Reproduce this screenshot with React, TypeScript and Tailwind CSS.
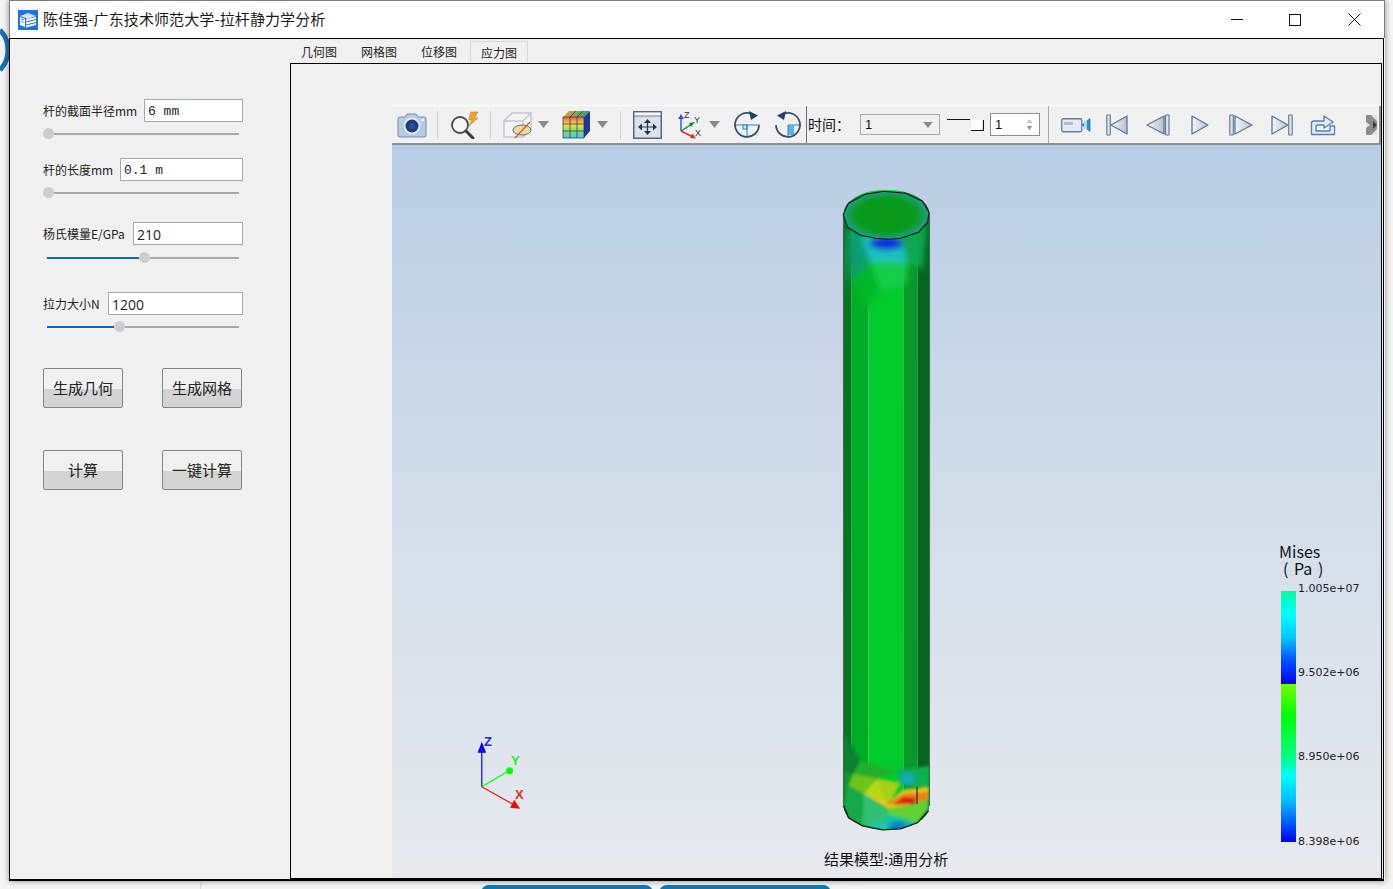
const cjk = "font-['Noto_Sans_CJK_SC','Noto_Sans',sans-serif]";

/* ── Left panel parts ─────────────────────────────────────── */

function Slider({ offset, className }: { offset: number; className: string }) {
  return (
    <div className={`flex h-[11px] w-[196px] items-center ${className}`}>
      {offset > 0 && (
        <div className="ml-[4px] h-[2px] bg-[#0b68b8]" style={{ width: offset - 4 }} />
      )}
      <div className="h-[11px] w-[11px] shrink-0 rounded-full bg-[#cdcdcd]" />
      <div className="h-[2px] flex-1 bg-[#a9a9a9]" />
    </div>
  );
}

function Field({
  label,
  value,
  inputClass,
  valueClass,
  className,
}: {
  label: string;
  value: string;
  inputClass: string;
  valueClass: string;
  className: string;
}) {
  return (
    <div className={`flex h-[23px] w-[200px] items-center justify-between ${className}`}>
      <span className={`text-[12px] whitespace-nowrap text-[#222] ${cjk}`}>{label}</span>
      <div className={`flex h-[23px] items-center border border-[#a8a8a8] bg-white pt-[2px] pl-[3px] whitespace-pre text-[#222] ${inputClass} ${valueClass}`}>
        {value}
      </div>
    </div>
  );
}

function PanelButton({ children }: { children: string }) {
  return (
    <div className={`flex h-[40px] w-[80px] items-center justify-center rounded-[2px] border border-[#858585] bg-[linear-gradient(#f0f0f0_0%,#f0f0f0_52%,#d4d4d4_52%,#d4d4d4_100%)] text-[15px] text-[#222] ${cjk}`}>
      {children}
    </div>
  );
}

/* ── Toolbar icons ────────────────────────────────────────── */

function Caret({ className }: { className: string }) {
  return (
    <svg width="11" height="7" viewBox="0 0 11 7" className={className}>
      <path d="M0 0H11L5.5 7Z" fill="#8a8a8a" />
    </svg>
  );
}

function Separator({ className }: { className: string }) {
  return <div className={`h-[28px] w-px bg-[#d0d0d0] ${className}`} />;
}

function CameraIcon() {
  return (
    <svg width="30" height="26" viewBox="0 0 30 26" className="ml-[5px]">
      <path d="M1 6.5Q1 5 3 5H8L10 2H19L21 5H27Q29 5 29 6.5V23Q29 25 27 25H3Q1 25 1 23Z" fill="#b7cbe2" stroke="#6a8fb5" />
      <rect x="24" y="7" width="3" height="2" fill="#eef4fa" />
      <circle cx="15" cy="14" r="8.5" fill="#dfe9f4" />
      <circle cx="15" cy="14" r="6.5" fill="#1d3c78" />
      <circle cx="15" cy="14" r="3" fill="#2c5395" />
    </svg>
  );
}

function SearchIcon() {
  return (
    <svg width="29" height="28" viewBox="0 0 29 28" className="ml-[12px]">
      <circle cx="10" cy="14" r="8" fill="#f7f7f7" stroke="#4a4a4a" strokeWidth="1.8" />
      <path d="M16 20L23 27" stroke="#3c3c3c" strokeWidth="3" strokeLinecap="round" />
      <path d="M21 1H28L24.5 7H28L19 15L22 9H18.5Z" fill="#f0a02c" stroke="#c8791a" strokeWidth="0.5" />
    </svg>
  );
}

function BoxIcon() {
  return (
    <svg width="29" height="29" viewBox="0 0 29 29" className="ml-[12px]">
      <path d="M1 11L9 3H28V18L20 27H1Z" fill="#f4f4f4" stroke="#c0c6d2" strokeWidth="1.5" />
      <path d="M1 11H20V27M20 11L28 3" fill="none" stroke="#c0c6d2" strokeWidth="1.5" />
      <ellipse cx="19" cy="20" rx="9" ry="5" fill="#e8dd9a" stroke="#5a6a8a" />
      <path d="M12 28L27 12" stroke="#d8562c" strokeWidth="1.2" />
    </svg>
  );
}

function RubikIcon() {
  return (
    <svg width="29" height="29" viewBox="0 0 29 29" className="ml-[13px]">
      <defs>
        <linearGradient id="rubikFace" x1="0" y1="0" x2="0" y2="1">
          <stop offset="0" stopColor="#f0603c" />
          <stop offset="0.35" stopColor="#f6d84a" />
          <stop offset="0.65" stopColor="#86dc6c" />
          <stop offset="1" stopColor="#4cc4ec" />
        </linearGradient>
        <linearGradient id="rubikTop" x1="0" y1="0" x2="1" y2="0">
          <stop offset="0" stopColor="#e8a040" />
          <stop offset="1" stopColor="#30a070" />
        </linearGradient>
      </defs>
      <path d="M1 7L7 1H28L22 7Z" fill="url(#rubikTop)" />
      <path d="M22 7L28 1V21L22 28Z" fill="#1c3a9c" />
      <rect x="1" y="7" width="21" height="21" fill="url(#rubikFace)" />
      <path d="M1 7H22V28H1ZM8 7V28M15 7V28M1 14H22M1 21H22M8 7L14 1M15 7L21 1" fill="none" stroke="#24384a" strokeWidth="0.7" />
    </svg>
  );
}

function FitIcon() {
  return (
    <svg width="29" height="28" viewBox="0 0 29 28" className="ml-[12px]">
      <rect x="0.75" y="0.75" width="27.5" height="26.5" fill="#dde1e8" stroke="#51678c" strokeWidth="1.5" />
      <rect x="1" y="1" width="27" height="4" fill="#f4f6f9" stroke="#51678c" strokeWidth="0.8" />
      <path d="M14.5 8L18 12H11ZM14.5 24L11 20H18ZM5 16L9 12.5V19.5ZM24 16L20 19.5V12.5Z" fill="#23364f" />
      <path d="M14.5 12V20M9 16H20" stroke="#23364f" strokeWidth="1.2" />
    </svg>
  );
}

function AxesIcon() {
  return (
    <svg width="28" height="30" viewBox="0 0 28 30" className="ml-[14px]">
      <path d="M5 21V7" stroke="#2a55c8" strokeWidth="1.4" />
      <path d="M5 4L8 9H2Z" fill="#2a55c8" />
      <path d="M5 21L16 14" stroke="#168a3a" strokeWidth="1.4" />
      <path d="M19 12L15 17L13 13Z" fill="#168a3a" />
      <path d="M5 21L17 27" stroke="#e02c2c" strokeWidth="1.4" />
      <path d="M20 28.5L14 28L16.5 23.5Z" fill="#e02c2c" />
      <text x="8" y="8" fontSize="9" fontFamily="Liberation Sans" fill="#333">Z</text>
      <text x="18" y="13" fontSize="9" fontFamily="Liberation Sans" fill="#333">Y</text>
      <text x="19" y="26" fontSize="9" fontFamily="Liberation Sans" fill="#333">X</text>
    </svg>
  );
}

function RotateCwIcon() {
  return (
    <svg width="28" height="28" viewBox="0 0 28 28" className="ml-[13px]">
      <path d="M1.5 14H26.5" stroke="#2a80c8" strokeWidth="1" />
      <rect x="10" y="14" width="4" height="4" fill="#d3e6f6" stroke="#2a80c8" />
      <path d="M14 14V26" stroke="#2a80c8" strokeWidth="1" />
      <path d="M19 3A12 12 0 1 0 26 14" fill="none" stroke="#34506f" strokeWidth="1.8" />
      <path d="M16 0L25 4.5L18 9Z" fill="#253f63" />
    </svg>
  );
}

function RotateCcwIcon() {
  return (
    <svg width="28" height="28" viewBox="0 0 28 28" className="ml-[13px]">
      <path d="M14 14H26.5" stroke="#2a80c8" strokeWidth="1" />
      <path d="M14 14H20V24H14Z" fill="#5cb0ec" />
      <path d="M14 14V26" stroke="#2a80c8" strokeWidth="1" />
      <path d="M9 3A12 12 0 1 1 2 14" fill="none" stroke="#34506f" strokeWidth="1.8" />
      <path d="M12 0L3 4.5L10 9Z" fill="#253f63" />
    </svg>
  );
}

function VideoIcon() {
  return (
    <svg width="30" height="16" viewBox="0 0 30 16" className="ml-[11px]">
      <rect x="0.75" y="1.75" width="20" height="13" rx="1.5" fill="#e6e9ef" stroke="#5f7da0" strokeWidth="1.3" />
      <rect x="3" y="5" width="9" height="3" fill="#b6bcc6" />
      <path d="M21 8L29 1.5V14.5Z" fill="#2a8fc0" stroke="#4e6f96" strokeWidth="0.8" />
      <rect x="23" y="4" width="3" height="8" fill="#a6dcf0" />
    </svg>
  );
}

function PlayerIcon({
  width,
  shape,
  bar,
  className,
}: {
  width: number;
  shape: string;
  bar?: number;
  className: string;
}) {
  return (
    <svg width={width} height="22" viewBox={`0 0 ${width} 22`} className={className}>
      <defs>
        <linearGradient id="playerFill" x1="0" y1="0" x2="1" y2="0">
          <stop offset="0" stopColor="#f3f5f8" />
          <stop offset="1" stopColor="#b9c0cb" />
        </linearGradient>
      </defs>
      <path d={shape} fill="url(#playerFill)" stroke="#5d7597" strokeWidth="1.3" strokeLinejoin="round" />
      {bar !== undefined && (
        <rect x={bar} y="1" width="3.5" height="20" rx="0.5" fill="#dfe3ea" stroke="#5d7597" strokeWidth="1.1" />
      )}
    </svg>
  );
}

function ExportIcon() {
  return (
    <svg width="26" height="22" viewBox="0 0 26 22" className="ml-[17px]">
      <path
        d="M1.5 20.5V9Q1.5 7 4 7H14V2L23 8L14 14V11H7.5Q6 11 6 13V17H20V12H24.5V20.5Z"
        fill="#e2ecf6"
        stroke="#5d7fa8"
        strokeWidth="1.3"
        strokeLinejoin="round"
      />
    </svg>
  );
}

function OverflowIcon() {
  return (
    <svg width="11" height="20" viewBox="0 0 11 20" className="ml-[30px]">
      <rect width="11" height="20" fill="#8c8c8c" />
      <path d="M0 0H5L11 6V0ZM0 20H5L11 14V20ZM0 7L4 10L0 13Z" fill="#e4e4e4" />
      <path d="M7 6L11 10L7 14Z" fill="#3f3f3f" />
    </svg>
  );
}

function Toolbar() {
  return (
    <div className="flex h-[40px] shrink-0 items-center border-t border-b-2 border-t-white border-b-[#8f8f8f] bg-[#f0f0f0]">
      <CameraIcon />
      <Separator className="ml-[10px]" />
      <SearchIcon />
      <Separator className="ml-[11px]" />
      <BoxIcon />
      <Caret className="ml-[6px]" />
      <RubikIcon />
      <Caret className="ml-[6px]" />
      <Separator className="ml-[12px]" />
      <FitIcon />
      <AxesIcon />
      <Caret className="ml-[5px]" />
      <RotateCwIcon />
      <RotateCcwIcon />
      <div className="ml-[4px] h-full w-px bg-[#707070]" />
      <span className={`ml-px w-[42px] text-[14px] whitespace-nowrap text-[#111] ${cjk}`}>时间：</span>
      <div className="ml-[10px] flex h-[21px] w-[80px] items-center justify-between border border-[#a8a8a8] px-[4px] font-['Liberation_Sans',sans-serif] text-[13px] text-[#111]">
        1
        <Caret className="mr-[2px] h-[6px] w-[10px]" />
      </div>
      <svg width="37" height="14" viewBox="0 0 37 14" className="ml-[7px]">
        <rect x="24" y="2" width="12" height="10" fill="#fbfbfb" />
        <path d="M0 1.5H23M24 12.5H36.5V2" fill="none" stroke="#111" strokeWidth="1.2" />
      </svg>
      <div className="ml-[6px] flex h-[23px] w-[50px] items-center justify-between border border-[#8a8a8a] bg-white pr-[6px] pl-[4px] font-['Liberation_Sans',sans-serif] text-[13px] text-[#111]">
        1
        <svg width="7" height="13" viewBox="0 0 7 13">
          <path d="M3.5 1L6.5 5H0.5Z" fill="#c4c4c4" />
          <path d="M3.5 12L0.5 8H6.5Z" fill="#9a9a9a" />
        </svg>
      </div>
      <div className="ml-[8px] h-full w-px bg-[#a8a8a8]" />
      <div className="ml-px flex h-full flex-1 items-center border-r-2 border-[#8f8f8f]">
        <VideoIcon />
        <PlayerIcon width={22} shape="M21 2V20L5 11Z" bar={0.8} className="ml-[15px]" />
        <PlayerIcon width={24} shape="M18 2V20L1 11Z" bar={19.5} className="ml-[18px]" />
        <PlayerIcon width={18} shape="M1 2V20L17 11Z" className="ml-[21px]" />
        <PlayerIcon width={24} shape="M6 2V20L23 11Z" bar={0.8} className="ml-[20px]" />
        <PlayerIcon width={22} shape="M1 2V20L17 11Z" bar={17.7} className="ml-[18px]" />
        <ExportIcon />
        <OverflowIcon />
      </div>
    </div>
  );
}

/* ── 3D scene ─────────────────────────────────────────────── */

const topFacets: [string, string][] = [
  ["843,225 850,260 843,300", "#128a50"],
  ["847,227 860,235 870,262 852,280", "#0c9c70"],
  ["860,235 900,238 908,262 870,262", "#1cc0c0"],
  ["900,238 927,222 922,270 908,262", "#08a850"],
  ["870,262 908,262 905,285 880,290", "#16cc4c"],
  ["852,280 870,262 880,290 865,310", "#00b82a"],
];

const bottomFacets: [string, string][] = [
  ["843,730 860,760 853,773 843,770", "#0a8030"],
  ["860,760 895,770 877,778 853,773", "#22b02a"],
  ["853,773 877,778 863,793 848,785", "#6cc41c"],
  ["877,778 900,782 888,805", "#a8d014"],
  ["877,778 888,805 863,793", "#b8d818"],
  ["843,770 853,773 848,785 843,803", "#0a9a30"],
  ["848,785 863,793 862,825 848,817 843,803", "#18a848"],
  ["863,793 888,805 887,813 882,829 862,825", "#30c070"],
  ["887,813 917,822 900,829 882,829", "#10c8a0"],
  ["888,805 928,795 928,808 917,822 887,813", "#60d034"],
  ["895,770 929,765 929,793 917,787 900,782", "#10b050"],
];

function Scene() {
  return (
    <svg viewBox="392 145 988 732" className="absolute inset-0 h-full w-full">
      <defs>
        <clipPath id="rod">
          <path d="M843 214A43 24.5 0 0 1 929 214V805A43 24 0 0 1 843 805Z" />
        </clipPath>
        <radialGradient id="rodTop">
          <stop offset="0" stopColor="#0a9a14" />
          <stop offset="0.68" stopColor="#0a9a1c" />
          <stop offset="1" stopColor="#229c84" />
        </radialGradient>
        <filter id="soft">
          <feGaussianBlur stdDeviation="3" />
        </filter>
        <filter id="softer">
          <feGaussianBlur stdDeviation="1.8" />
        </filter>
        <filter id="softTop">
          <feGaussianBlur stdDeviation="3" />
        </filter>
      </defs>
      <g clipPath="url(#rod)">
        <rect x="843" y="190" width="8" height="640" fill="#067420" />
        <rect x="851" y="190" width="17" height="640" fill="#00ae26" />
        <rect x="868" y="190" width="35" height="640" fill="#00cc2c" />
        <rect x="903" y="190" width="14" height="640" fill="#049a26" />
        <rect x="917" y="190" width="12" height="640" fill="#05661e" />
        <g filter="url(#softTop)">
          {topFacets.map(([points, fill]) => (
            <polygon key={points} points={points} fill={fill} />
          ))}
        </g>
        <g filter="url(#softer)">
          {bottomFacets.map(([points, fill]) => (
            <polygon key={points} points={points} fill={fill} />
          ))}
        </g>
        <g filter="url(#soft)">
          <ellipse cx="886" cy="243" rx="16" ry="5" fill="#0a1ce0" />
          <ellipse cx="907" cy="778" rx="7" ry="6" fill="#18a8d8" />
          <ellipse cx="897" cy="826" rx="9" ry="3" fill="#0a40e0" />
          <ellipse cx="878" cy="825" rx="9" ry="3" fill="#18c8d8" />
        </g>
        <g filter="url(#softer)">
          <path d="M864 793L888 801L903 789L928 786V798L905 805L888 808Z" fill="#e8c818" />
          <path d="M884 804L903 793L927 791V799L905 803Z" fill="#f08018" />
          <path d="M893 804L903 796L915 797V803Z" fill="#d82810" />
        </g>
      </g>
      <polygon
        points="842.7,214.3 848,203 865,194 883,191 905,193 922,201 928.5,212 927,222 918,232 900,238 888,239 875,238 860,235 847,227"
        fill="url(#rodTop)"
        stroke="#101010"
        strokeWidth="1"
      />
      <path d="M843 215V805M929 213V805" fill="none" stroke="#0d3a1a" strokeWidth="0.7" />
      <path d="M843 805L848 817L862 825L882 829L900 828L917 822L928 810" fill="none" stroke="#101010" strokeWidth="1.2" />
      <path d="M916.5 786V803" stroke="#101010" strokeWidth="1" />

      <path d="M481.7 786V750" stroke="#0000ff" strokeWidth="1.2" />
      <path d="M481.7 741L486 752H477.5Z" fill="#0000ff" />
      <path d="M481.7 786L507 771" stroke="#00ff00" strokeWidth="1" />
      <circle cx="509.5" cy="770" r="3.5" fill="#00ff00" />
      <path d="M481.7 786L512 803" stroke="#ff0000" strokeWidth="1" />
      <path d="M520 808L510 807L514 799Z" fill="#ff0000" />
      <text x="484" y="745" fontSize="13" fontWeight="700" fontFamily="Liberation Sans" fill="#2222ff">Z</text>
      <text x="511" y="764.5" fontSize="13" fontWeight="700" fontFamily="Liberation Sans" fill="#22ee22">Y</text>
      <text x="515" y="798" fontSize="13" fontWeight="700" fontFamily="Liberation Sans" fill="#ff2222">X</text>
    </svg>
  );
}

function Legend() {
  return (
    <div className="absolute top-[398px] left-[889px] flex flex-col">
      <div className={`ml-[-2px] text-[16px] leading-[17px] text-[#111] ${cjk}`}>Mises</div>
      <div className={`ml-[2px] text-[16px] leading-[17px] whitespace-pre [word-spacing:2px] text-[#111] ${cjk}`}>( Pa )</div>
      <div className="mt-[14px] flex">
        <div className="flex w-[15px] flex-col">
          <div className="h-[93px] bg-[linear-gradient(#00ffa0_0%,#00ffff_25%,#00c8ff_50%,#0050ff_75%,#0000ff_100%)]" />
          <div className="h-[158px] bg-[linear-gradient(#70ff00_0%,#00ff00_20%,#00ff90_48%,#00ffff_58%,#00b8ff_75%,#0000ff_100%)]" />
        </div>
        <div className="relative ml-[2px] w-[62px] font-['DejaVu_Sans',sans-serif] text-[11px] leading-[13px] text-[#222]">
          <div className="absolute top-[-9px]">1.005e+07</div>
          <div className="absolute top-[75px]">9.502e+06</div>
          <div className="absolute top-[159px]">8.950e+06</div>
          <div className="absolute top-[244px]">8.398e+06</div>
        </div>
      </div>
    </div>
  );
}

/* ── Page ──────────────────────────────────────────────────── */

const tabs = [
  { label: "几何图", cls: "ml-[11px] w-[36px]" },
  { label: "网格图", cls: "ml-[24px] w-[36px]" },
  { label: "位移图", cls: "ml-[24px] w-[36px]" },
];

export default function App() {
  return (
    <div className="relative h-[889px] w-[1393px] overflow-hidden bg-[#f4f4f4]">
      {/* desktop behind the window */}
      <svg width="9" height="50" viewBox="0 0 9 50" className="absolute top-[28px] left-0">
        <path d="M0 2Q8 10 8 22Q8 34 0 42" fill="none" stroke="#1c6fb0" strokeWidth="5" />
      </svg>
      <div className="absolute top-[880px] left-[200px] h-[9px] w-px bg-[#dcdcdc]" />
      <div className="absolute top-[885px] left-[481px] flex gap-[6px]">
        <div className="h-[10px] w-[172px] rounded-t-[8px] bg-[#0a7ab5]" />
        <div className="h-[10px] w-[172px] rounded-t-[8px] bg-[#0a7ab5]" />
      </div>

      <div className="relative ml-[9px] flex h-[881px] w-[1376px] flex-col shadow-[0_0_6px_rgba(0,0,0,0.45)]">
        {/* title bar */}
        <div className="flex h-[38px] shrink-0 items-center border-t border-r border-l border-[#7f7f7f] bg-white pl-[8px]">
          <svg width="20" height="20" viewBox="0 0 20 20">
            <rect width="20" height="20" fill="#1b73e8" />
            <path d="M2 6L10 3L18 6L10 9Z" fill="#cfe2fb" />
            <path d="M2 7L7 9V17L2 15Z" fill="#ffffff" />
            <path d="M8 9.5L18 7V9L8 11.5ZM8 12.5L18 10V12L8 14.5ZM8 15.5L18 13V15L8 17.5Z" fill="#ffffff" />
            <path d="M3.5 9.5H5.5M3.5 12H5.5" stroke="#1b73e8" />
          </svg>
          <span className={`ml-[5px] text-[15px] tracking-[0.1px] whitespace-nowrap text-[#1a1a1a] ${cjk}`}>
            陈佳强-广东技术师范大学-拉杆静力学分析
          </span>
          <div className="ml-auto flex h-full">
            <div className="flex w-[59px] items-center justify-center">
              <div className="h-px w-[12px] bg-[#111]" />
            </div>
            <div className="flex w-[59px] items-center justify-center">
              <div className="mr-px h-[12px] w-[12px] border border-[#111]" />
            </div>
            <div className="flex w-[59px] items-center justify-center">
              <svg width="13" height="13" viewBox="0 0 13 13">
                <path d="M0.5 0.5L12.5 12.5M12.5 0.5L0.5 12.5" stroke="#111" />
              </svg>
            </div>
          </div>
        </div>

        {/* window body */}
        <div className="mr-px flex flex-1 border-t border-r border-b-2 border-l border-black bg-[#f0f0f0]">
          {/* left panel */}
          <div className="w-[280px] shrink-0 pt-[60px] pl-[33px]">
            <Field label="杆的截面半径mm" value="6 mm" inputClass="w-[99px]" valueClass="font-['Liberation_Mono',monospace] text-[13px]" className="" />
            <Slider offset={0} className="mt-[6px]" />
            <Field label="杆的长度mm" value="0.1 m" inputClass="w-[123px]" valueClass="font-['Liberation_Mono',monospace] text-[13px]" className="mt-[19px]" />
            <Slider offset={0} className="mt-[6px]" />
            <Field label="杨氏模量E/GPa" value="210" inputClass="w-[110px]" valueClass="font-['Open_Sans',sans-serif] text-[14px]" className="mt-[24px]" />
            <Slider offset={96} className="mt-[7px]" />
            <Field label="拉力大小N" value="1200" inputClass="w-[135px]" valueClass="font-['Open_Sans',sans-serif] text-[14px]" className="mt-[29px]" />
            <Slider offset={71} className="mt-[6px]" />
            <div className="mt-[36px] flex gap-[39px]">
              <PanelButton>生成几何</PanelButton>
              <PanelButton>生成网格</PanelButton>
            </div>
            <div className="mt-[42px] flex gap-[39px]">
              <PanelButton>计算</PanelButton>
              <PanelButton>一键计算</PanelButton>
            </div>
          </div>

          {/* right side */}
          <div className="flex flex-1 flex-col">
            <div className={`flex h-[24px] shrink-0 items-center pt-[2px] text-[12px] text-[#222] ${cjk}`}>
              {tabs.map((tab) => (
                <span key={tab.label} className={`whitespace-nowrap ${tab.cls}`}>
                  {tab.label}
                </span>
              ))}
              <span className="ml-[13px] flex h-full w-[58px] items-center justify-center self-end border-x border-t border-[#d8d8d8] whitespace-nowrap">
                应力图
              </span>
            </div>
            <div className="mr-px flex flex-1 border border-black">
              <div className="w-[101px] shrink-0" />
              <div className="flex flex-1 flex-col pt-[41px]">
                <Toolbar />
                <div className="relative flex-1 overflow-hidden bg-[linear-gradient(#b9cde4_0%,#d3dde9_50%,#e6e9ee_100%)]">
                  <Scene />
                  <Legend />
                  <div className={`absolute bottom-[9px] left-[432px] text-[15px] leading-[20px] whitespace-nowrap text-[#111] ${cjk}`}>
                    结果模型:通用分析
                  </div>
                </div>
              </div>
            </div>
          </div>
        </div>
      </div>
    </div>
  );
}
